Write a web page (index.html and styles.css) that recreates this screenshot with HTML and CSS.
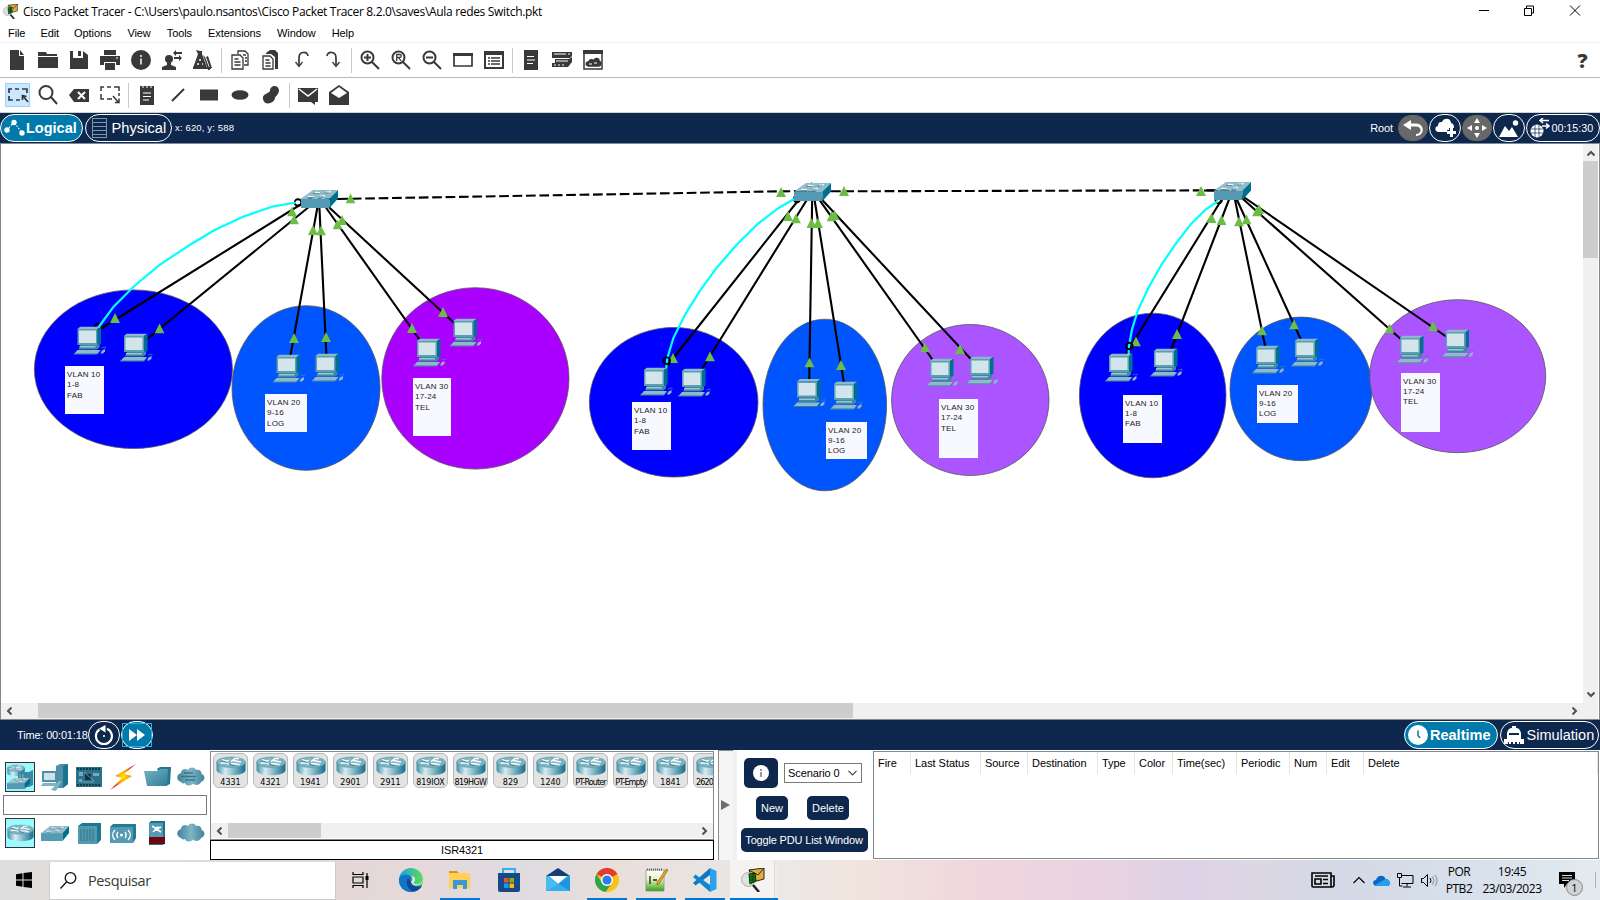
FILE: index.html
```html
<!DOCTYPE html>
<html lang="pt">
<head>
<meta charset="utf-8">
<title>Cisco Packet Tracer</title>
<link rel="stylesheet" href="styles.css">
</head>
<body>
<svg class="defs" width="0" height="0">
  <defs>
    <linearGradient id="rg" x1="0" x2="1"><stop offset="0" stop-color="#3c8fa8"/><stop offset=".3" stop-color="#d9edf2"/><stop offset=".55" stop-color="#8fc0ce"/><stop offset="1" stop-color="#156f8b"/></linearGradient>
    <linearGradient id="cg" x1="0" x2="1"><stop offset="0" stop-color="#3f8299"/><stop offset=".5" stop-color="#7fb5c6"/><stop offset="1" stop-color="#3f8299"/></linearGradient>
    <linearGradient id="fg" x1="0" x2="1" y1="0" y2="1"><stop offset="0" stop-color="#79b2c4"/><stop offset="1" stop-color="#2f7d98"/></linearGradient>
    <radialGradient id="bolt"><stop offset="0" stop-color="#ffe600"/><stop offset=".5" stop-color="#ff9a00"/><stop offset="1" stop-color="#f01414"/></radialGradient>
    <linearGradient id="edge" x1="0" x2="1"><stop offset="0" stop-color="#1b9de2"/><stop offset="1" stop-color="#5fdd5a"/></linearGradient>
    <linearGradient id="npp" x1="0" x2="0" y1="0" y2="1"><stop offset="0" stop-color="#fff"/><stop offset=".45" stop-color="#e4f5c0"/><stop offset="1" stop-color="#2fa312"/></linearGradient>
  </defs>
  <symbol id="tri" viewBox="0 0 10 10"><path d="M5 0L10 10H0z" fill="#6bbd45"/></symbol>
  <symbol id="switch" viewBox="0 0 37 18">
    <path d="M0 8.5L12 0H37L28.5 8.5z" fill="#93bccb"/><path d="M0 8.500H28.500V18H0z" fill="#559ab3"/><path d="M28.500 8.500L37 0V8.500L28.500 18z" fill="#00708f"/>
    <path d="M14 2.500h5M25 2h4M8 6.500h5M19 6h5M16 1.500l-2 1.500M28 1l2 1M9 5.500l-2 1.500M22 5l2 1.500" stroke="#fff" stroke-width=".9" fill="none"/><path d="M12 3.500h6M23 3h5M7 7.500h6M18 7h5" stroke="#34738a" stroke-width=".6"/>
  </symbol>
  <symbol id="pc" viewBox="0 0 33 28">
    <path d="M4 2.500L7 0H27.500L24 2.500z" fill="#8fb9c8"/><path d="M24 2.500L27.500 0V17L24 20z" fill="#00708f"/><path d="M4 2.500H24V18.500H4z" fill="#5b9fb5"/>
    <path d="M5.500 4H22.500V16.500H5.500z" fill="#d3e4ea"/><path d="M7 18.500H22L26 18V21L23 23H5z" fill="#3c8aa2"/><path d="M6 19.500H22V21H6z" fill="#9cc4d1"/>
    <path d="M4 23.500H27L23.500 28H0z" fill="#8fb9c8"/><path d="M0 27H24L27 23.500V24.500L24 28H0z" fill="#2f7d98"/><path d="M28.500 24L31.500 22.500V25L29.500 27H27z" fill="#8fb9c8"/><path d="M28 21.500l4-1v1.500" stroke="#3c8aa2" fill="none" stroke-width=".7"/>
  </symbol>
  <symbol id="router" viewBox="0 0 30 19">
    <path d="M.5 5.500V13.500C.5 20.500 29.500 20.500 29.500 13.500V5.500z" fill="url(#rg)"/><ellipse cx="15" cy="5.700" rx="14.500" ry="5.200" fill="#7fb3c3" stroke="#4b8fa5" stroke-width=".5"/>
    <path d="M6 3l5 1.500 2-1M4.500 6.500h6l2 1.500M15 5l4-3h4M17 4l8 1.500M15 7l6 .5 3 1" stroke="#fff" stroke-width="1.300" fill="none"/><path d="M5 4.500l6 1.500M14 8l5 1.500" stroke="#22718a" stroke-width=".7"/>
  </symbol>
  <symbol id="cloud" viewBox="0 0 28 20"><path d="M4 15C-1 14-1 7 4 6C4 2 9 1 11 3C13-.5 18 0 19 3C22 2 25 4 24.500 7C28.500 8 28.500 14 24 15C23 18 18 19 16 16.500C13 20 8 18.500 8 16C6 17 4.500 16 4 15z" fill="url(#cg)"/></symbol>
  <symbol id="left" viewBox="0 0 7 8"><path d="M5.500 .5L2 4L5.500 7.500" fill="none" stroke="#505050" stroke-width="2"/></symbol>
  <symbol id="right" viewBox="0 0 7 8"><path d="M1.500 .5L5 4L1.500 7.500" fill="none" stroke="#505050" stroke-width="2"/></symbol>
  <symbol id="pt" viewBox="0 0 24 24"><path d="M8 2L23 0V11L12 14z" fill="#e0ac48" stroke="#332506"/><path d="M8 2L17 7L23 0" fill="none" stroke="#332506"/><circle cx="7.500" cy="11.500" r="7" fill="#dfe3df" stroke="#aaa"/><path d="M8 6L14 5L15 13L9 16z" fill="#108417" stroke="#032f06"/><path d="M9 9h5M9 12h5M12 6v9" stroke="#032f06" stroke-width=".7"/><path d="M12 17L18 24" stroke="#222" stroke-width="2.500"/></symbol>
</svg>

<header class="titlebar">
  <svg class="appicon" viewBox="0 0 24 24"><use href="#pt"/></svg>
  <span class="title">Cisco Packet Tracer - C:\Users\paulo.nsantos\Cisco Packet Tracer 8.2.0\saves\Aula redes Switch.pkt</span>
  <svg class="winbtns" width="102" height="12" viewBox="0 0 102 12" fill="none" stroke="#000"><path d="M0 5.500h10M45.500 3.500h7v7h-7zM47.500 3v-2h7v7h-2M91 .5l10 10M101 .5l-10 10"/></svg>
</header>
<nav class="menu"><span>File</span><span>Edit</span><span>Options</span><span>View</span><span>Tools</span><span>Extensions</span><span>Window</span><span>Help</span></nav>

<div class="toolbar main">
  <svg viewBox="0 0 20 20"><path d="M3 0h9v6h5v14H3zM13 0l4 5h-4z"/></svg>
  <svg viewBox="0 0 20 20"><path d="M0 2h8l1 2h10v2H0zM0 7h20v11H0z"/></svg>
  <svg viewBox="0 0 20 20"><path d="M1 1h3v7h10V1l5 4v14H1zM9 1h3v5H9z"/></svg>
  <svg viewBox="0 0 20 20"><path d="M4 0h12v5H4zM0 6h20v9h-4v-3H4v3H0zM5 13h10v7H5z"/><path d="M16 8h2" stroke="#fff"/></svg>
  <svg viewBox="0 0 20 20"><circle cx="10" cy="10" r="10"/><path d="M10 5v2M10 8.500v6" stroke="#fff" stroke-width="1.500"/></svg>
  <svg viewBox="0 0 20 20"><circle cx="7" cy="9" r="4"/><path d="M5 11h4v4l5 2v3H0v-3l5-2z"/><path d="M11 3l3-3v2h6v2h-6v2zM20 8l-3-3v2h-5v2h5v2z"/></svg>
  <svg viewBox="0 0 20 20"><path d="M3 0l4 1h2v3l5 14H0L5 4zM10 5l2 2 5 13h-2zM13 7l2-1 4 12h-2zM0 17h18v2H0z"/><path d="M6 10h2M4 14h2M9 14h1" stroke="#fff" stroke-width="1.500"/></svg>
  <i class="sep"></i>
  <svg viewBox="0 0 20 20" class="o"><path d="M8 4V1h7l3 3v11h-4M2 5h8l3 3v11H2zM4.500 9h4M4.500 12h6M4.500 15h6M13 5h3M15 8h2M15 11h2"/></svg>
  <svg viewBox="0 0 20 20"><path d="M5 3l4-3h5l3 3v16h-3V7l-4-3H5z"/><path class="o" d="M2 6h7l3 3v10H2zM4.500 10h4M4.500 13h5M4.500 16h5"/></svg>
  <svg viewBox="0 0 20 20" class="o"><path d="M16 6C15 1 7 1 7 8V15" stroke-width="1.700"/><path d="M3.500 12L7 16.500L10.500 12"/></svg>
  <svg viewBox="0 0 20 20" class="o"><path d="M4 6C5 1 13 1 13 8V15" stroke-width="1.700"/><path d="M9.500 12L13 16.500L16.500 12"/></svg>
  <i class="sep"></i>
  <svg viewBox="0 0 20 20" class="o"><circle cx="7.500" cy="7.500" r="6" stroke-width="2"/><path d="M12 12l7 7M7.500 4v7M4 7.500h7" stroke-width="2"/></svg>
  <svg viewBox="0 0 20 20" class="o"><circle cx="7.500" cy="7.500" r="6" stroke-width="2"/><path d="M12 12l7 7" stroke-width="2"/><path d="M5.700 11V4.500h3c2 0 2 3 0 3H6M8 8l2 3"/></svg>
  <svg viewBox="0 0 20 20" class="o"><circle cx="7.500" cy="7.500" r="6" stroke-width="2"/><path d="M12 12l7 7M4 7.500h7" stroke-width="2"/></svg>
  <svg viewBox="0 0 20 20" class="o"><path d="M1 4h18v12H1z" stroke-width="1.700"/><path d="M0 4.500h20" stroke-width="3"/></svg>
  <svg viewBox="0 0 20 20" class="o"><path d="M1 2h18v16H1z" stroke-width="2"/><path d="M0 3h20" stroke-width="4"/><path d="M4 8h2M7 8h9M4 11h2M7 11h9M4 14h2M7 14h9"/></svg>
  <i class="sep"></i>
  <svg viewBox="0 0 20 20"><path d="M3 0h14v20H3z"/><path d="M6 6.500h7M6 10h8M6 13.500h6" stroke="#fff" stroke-width="1.200"/></svg>
  <svg viewBox="0 0 20 20"><path d="M0 2h20v4l-2 2H0zM3 9h14l3-2v5l-4 5H0v-4h3z"/><path d="M2 4h12M16 4h2M4 11h12M2 15h2M6 15h2M10 15h2" stroke="#fff"/></svg>
  <svg viewBox="0 0 20 20" class="o"><path d="M1 1h18v18H1z" stroke-width="1.500"/><path d="M0 2h20" stroke-width="4"/><path d="M5 16c-3-1-2-5 1-4 0-3 4-3 5-1 0-4 6-3 5 0 3 1 2 5 0 5z" fill="#39393b"/><path d="M6 14h3M11 13h3" stroke="#fff" stroke-width="1"/></svg>
  <span class="help">?</span>
</div>

<div class="toolbar edit">
  <span class="active"><svg viewBox="0 0 20 20" class="o"><path d="M1 8V4h3M7 4h4M14 4h5v4M1 11v4h4M8 15h4" stroke-width="1.700"/><path d="M20 17l-5-6M14.500 15v-4.500l4 1" stroke-width="1.700"/></svg></span>
  <svg viewBox="0 0 20 20" class="o"><circle cx="8" cy="7.500" r="6.500" stroke-width="2"/><path d="M13 12l6 7" stroke-width="2"/></svg>
  <svg viewBox="0 0 20 20"><path d="M0 10l5-6h15v13H5z"/><path d="M9 7l7 7M16 7l-7 7" stroke="#fff" stroke-width="2"/></svg>
  <svg viewBox="0 0 20 20" class="o"><path d="M1 6V2h3M7 2h4M14 2h5v4M1 9v5h3M7 14h5M19 8v3" stroke-width="1.500"/><path d="M13 11l6 7M15 17.500h4v-4" stroke-width="1.500"/></svg>
  <i class="sep"></i>
  <svg viewBox="0 0 20 20"><path d="M3 1h14v19H3z"/><path d="M6 0v3M10 0v3M14 0v3" stroke="#fff"/><path d="M6 8h8M6 11.500h8M6 15h6" stroke="#fff" stroke-width="1.200"/></svg>
  <svg viewBox="0 0 20 20" class="o"><path d="M4 16L16 4" stroke-width="2"/></svg>
  <svg viewBox="0 0 20 20"><path d="M1 4.500h18v11H1z"/></svg>
  <svg viewBox="0 0 20 20"><ellipse cx="10" cy="10" rx="8.500" ry="4.800"/></svg>
  <svg viewBox="0 0 20 20"><path d="M9 6C9 0 17-1 18 5C18 10 14 11 14 13C13 19 3 21 2 14C1 9 7 9 9 6z"/></svg>
  <i class="sep"></i>
  <svg viewBox="0 0 20 20"><path d="M0 3h20v14h-3v3l-4-3H0z"/><path d="M1 4l9 7 9-7" stroke="#fff" fill="none" stroke-width="1.500"/></svg>
  <svg viewBox="0 0 20 20"><path d="M0 7l10-7 10 7v13H0z"/><path d="M2 8l8-6 8 6-8 5z" fill="#fff"/></svg>
</div>

<div class="bar nav">
  <div class="pill on logical"><svg width="21" height="18" viewBox="0 0 21 18"><path d="M3 11L10 3L18 14" stroke="#fff" stroke-width="1.200" stroke-dasharray="1.500 1.500" fill="none"/><g fill="#fff"><circle cx="3" cy="11" r="2.700"/><circle cx="10" cy="3.500" r="2.700"/><circle cx="18" cy="14" r="2.700"/></g></svg><b>Logical</b></div>
  <div class="pill physical"><svg width="15" height="20" viewBox="0 0 15 20"><path d="M.5.500h14v19H.5zM.5 4.500h14M.5 8.500h14M.5 12.500h14M.5 16.500h14" fill="none" stroke="#8493ae"/></svg><span>Physical</span></div>
  <span class="coords">x: 620, y: 588</span>
  <span class="root">Root</span>
  <div class="round gray"><svg width="20" height="18" viewBox="0 0 20 18"><path d="M0 6L8 1V4.500H13C22 4.500 22 17 13 17V15C19 15 19 7.500 13 7.500H8V11z" fill="#fff"/></svg></div>
  <div class="round"><svg width="21" height="20" viewBox="0 0 21 20" fill="#fff"><path d="M3 14C-1 13 0 8 3 8C3 3 7 4 7 4C9-1 16 0 16 5C20 6 20 12 16 12V14z"/><path d="M12 14.500h9M16.500 10v9" stroke="#0e274c" stroke-width="5"/><path d="M12 14.500h9M16.500 10v9" stroke="#fff" stroke-width="3"/></svg></div>
  <div class="round gray"><svg width="20" height="20" viewBox="0 0 20 20" fill="#fff"><path d="M10 0l3 5H7zM10 20l3-5H7zM0 10l5-3v6zM20 10l-5-3v6z"/><circle cx="10" cy="10" r="2"/></svg></div>
  <div class="round"><svg width="20" height="18" viewBox="0 0 20 18" fill="#fff"><path d="M0 18L6 7l4 5 3-4 6 10z"/><circle cx="16.500" cy="4" r="2.700"/></svg></div>
  <div class="pill env"><svg width="20" height="20" viewBox="0 0 20 20"><circle cx="7" cy="13" r="6.500" fill="#fff"/><path d="M1 11h12M1 15h12M5 7v12M9 7v12" stroke="#0e274c" stroke-width=".7"/><path d="M10 2.500h9M13 0l-3 2.500 3 2.500M12 8h7M16 5.500L19 8l-3 2.500" stroke="#fff" stroke-width="1.600" fill="none"/></svg><span>00:15:30</span></div>
</div>

<main class="workspace">
  <div class="canvas">
    <svg class="net" width="1582" height="559" viewBox="1 144 1582 559">
      <g stroke="#555" stroke-width=".8">
        <ellipse cx="133.400" cy="369.200" rx="99" ry="79.300" fill="#00f"/>
        <ellipse cx="306" cy="388" rx="74" ry="82.300" fill="#0055ff"/>
        <ellipse cx="475.400" cy="378.400" rx="93.600" ry="90.700" fill="#a0f"/>
        <ellipse cx="673.700" cy="402.300" rx="84.300" ry="74.800" fill="#00f"/>
        <ellipse cx="824.800" cy="405" rx="61.800" ry="85.800" fill="#0055ff"/>
        <ellipse cx="970.300" cy="400" rx="78.700" ry="75.500" fill="#aa55ff"/>
        <ellipse cx="1152.700" cy="395.500" rx="73.300" ry="82.300" fill="#00f"/>
        <ellipse cx="1301" cy="388.900" rx="71" ry="71.800" fill="#0055ff"/>
        <ellipse cx="1457.700" cy="376.200" rx="88" ry="76.500" fill="#aa55ff"/>
      </g>
      <g stroke="#000" stroke-width="2.100" fill="none">
        <path d="M319 193L89 336M319.500 198.300L136 348M319 198.500L288 369M319 198.500L327 368M319.500 198.500L429 353M319.500 198.500L465 333"/>
        <path d="M812 183L656 380M812 191.500L694 382M812.300 191L809 393M813 190L846 396M812 189.400L942 373M812 189L982 371"/>
        <path d="M1232 183L1121 362M1232.700 190L1166 363M1233 190L1268 360M1232.500 190L1307 353M1232 189.300L1412 349M1232 189L1457 344"/>
        <path d="M325 199.200L812 190.800" stroke-dasharray="9.700 3.700"/><path d="M831 191.300L1232 190.300" stroke-dasharray="9.700 3.700"/>
        <path d="M331 199h10M1204 190.500h14"/>
      </g>
      <g fill="none" stroke="#000" stroke-width="1.900"><circle cx="298" cy="202.500" r="3.300"/><circle cx="98" cy="327" r="3.200"/><circle cx="797" cy="199" r="3.200"/><circle cx="1218.700" cy="200" r="3.200"/></g>
      <g stroke="#0ff" stroke-width="2.200" fill="none" stroke-linejoin="round">
        <path d="M296 202.500L272 206.700L243 216.700L214.600 230L186 247.300L159 265.300L134.300 286L113.600 306.700L98 328"/>
        <path d="M795 198.500L779 207.700L758.300 223.300L736.700 244.700L716.700 267.700L699.300 291.700L684.700 315.300L673.300 338.300L667.300 358.300L666 371"/>
        <path d="M1218 201L1206 209.300L1190.700 224.300L1176 243.300L1161.700 264.300L1149 286.700L1138 310L1132 329.300L1129 346L1128.500 356"/>
      </g>
      <g><use href="#tri" x="345.500" y="193.500" width="10" height="10"/><use href="#tri" x="287" y="206.500" width="10" height="10"/><use href="#tri" x="289" y="214.500" width="10" height="10"/><use href="#tri" x="308" y="225" width="10" height="10"/><use href="#tri" x="316" y="225.500" width="10" height="10"/><use href="#tri" x="332.500" y="219.500" width="10" height="10"/><use href="#tri" x="337" y="215" width="10" height="10"/><use href="#tri" x="110" y="313" width="10" height="10"/><use href="#tri" x="154.500" y="323.500" width="10" height="10"/><use href="#tri" x="289" y="333" width="10" height="10"/><use href="#tri" x="321" y="332" width="10" height="10"/><use href="#tri" x="407" y="323" width="10" height="10"/><use href="#tri" x="438" y="307" width="10" height="10"/>
      <use href="#tri" x="776" y="187" width="10" height="10"/><use href="#tri" x="839" y="186" width="10" height="10"/><use href="#tri" x="783" y="211" width="10" height="10"/><use href="#tri" x="791" y="213.500" width="10" height="10"/><use href="#tri" x="806.500" y="218" width="10" height="10"/><use href="#tri" x="813" y="218" width="10" height="10"/><use href="#tri" x="826.500" y="211.500" width="10" height="10"/><use href="#tri" x="829.500" y="210" width="10" height="10"/><use href="#tri" x="668" y="353" width="10" height="10"/><use href="#tri" x="705" y="351.500" width="10" height="10"/><use href="#tri" x="804.500" y="357.500" width="10" height="10"/><use href="#tri" x="836" y="360" width="10" height="10"/><use href="#tri" x="920" y="342.500" width="10" height="10"/><use href="#tri" x="955" y="344" width="10" height="10"/>
      <use href="#tri" x="1196" y="186" width="10" height="10"/><use href="#tri" x="1206.500" y="213" width="10" height="10"/><use href="#tri" x="1216.500" y="215" width="10" height="10"/><use href="#tri" x="1234" y="216.500" width="10" height="10"/><use href="#tri" x="1241.500" y="214.500" width="10" height="10"/><use href="#tri" x="1252" y="206.500" width="10" height="10"/><use href="#tri" x="1254" y="204" width="10" height="10"/><use href="#tri" x="1131" y="336.500" width="10" height="10"/><use href="#tri" x="1172" y="329" width="10" height="10"/><use href="#tri" x="1257" y="325.500" width="10" height="10"/><use href="#tri" x="1289" y="319.500" width="10" height="10"/><use href="#tri" x="1384.500" y="323.500" width="10" height="10"/><use href="#tri" x="1428" y="321" width="10" height="10"/></g>
      <g fill="none" stroke="#000" stroke-width="1.900"><circle cx="666.700" cy="360.700" r="3.300"/><circle cx="1129.300" cy="346" r="3.300"/></g>
      <use href="#switch" x="301" y="190" width="37" height="18"/><use href="#switch" x="794" y="183" width="37" height="18"/><use href="#switch" x="1214" y="182" width="37" height="18"/>
      <use href="#pc" x="73.500" y="326.500" width="33" height="28"/><use href="#pc" x="120" y="333.500" width="33" height="28"/><use href="#pc" x="272.500" y="354.500" width="33" height="28"/><use href="#pc" x="311.500" y="353.500" width="33" height="28"/><use href="#pc" x="413" y="338.500" width="33" height="28"/><use href="#pc" x="449.500" y="318.500" width="33" height="28"/>
      <use href="#pc" x="640" y="367.500" width="33" height="28"/><use href="#pc" x="678" y="368.500" width="33" height="28"/><use href="#pc" x="793" y="379" width="33" height="28"/><use href="#pc" x="830" y="381.500" width="33" height="28"/><use href="#pc" x="926" y="358.500" width="33" height="28"/><use href="#pc" x="966" y="356.500" width="33" height="28"/>
      <use href="#pc" x="1105" y="353.500" width="33" height="28"/><use href="#pc" x="1150" y="348.500" width="33" height="28"/><use href="#pc" x="1252" y="345.500" width="33" height="28"/><use href="#pc" x="1291" y="338.500" width="33" height="28"/><use href="#pc" x="1396" y="335.500" width="33" height="28"/><use href="#pc" x="1441.500" y="329.500" width="33" height="28"/>
    </svg>
    <div class="note n1">VLAN 10<br>1-8<br>FAB</div>
    <div class="note n2">VLAN 20<br>9-16<br>LOG</div>
    <div class="note n3">VLAN 30<br>17-24<br>TEL</div>
    <div class="note n4">VLAN 10<br>1-8<br>FAB</div>
    <div class="note n5">VLAN 20<br>9-16<br>LOG</div>
    <div class="note n6">VLAN 30<br>17-24<br>TEL</div>
    <div class="note n7">VLAN 10<br>1-8<br>FAB</div>
    <div class="note n8">VLAN 20<br>9-16<br>LOG</div>
    <div class="note n9">VLAN 30<br>17-24<br>TEL</div>
  </div>
  <div class="vscroll"><svg width="8" height="7" viewBox="0 0 8 7"><path d="M.5 5.500L4 2L7.500 5.500" fill="none" stroke="#505050" stroke-width="2"/></svg><i></i><svg width="8" height="7" viewBox="0 0 8 7"><path d="M.5 1.500L4 5L7.500 1.500" fill="none" stroke="#505050" stroke-width="2"/></svg></div>
  <div class="hscroll"><svg width="7" height="8"><use href="#left"/></svg><i></i><svg width="7" height="8"><use href="#right"/></svg></div>
</main>

<div class="bar sim">
  <span class="time">Time: 00:01:18</span>
  <div class="round"><svg width="20" height="20" viewBox="0 0 20 20"><path d="M13 3.800A8 8 0 1 1 5.500 4.500" fill="none" stroke="#fff" stroke-width="2.200"/><path d="M5 3.500L11.500 0V7.500z" fill="#fff"/><circle cx="10" cy="11" r="1.100" fill="#fff"/></svg></div>
  <div class="round ff"><svg width="18" height="14" viewBox="0 0 18 14"><path d="M1 1l8 6-8 6zM9 1l8 6-8 6z" fill="#fff"/></svg></div>
  <div class="pill on realtime"><svg width="20" height="20" viewBox="0 0 20 20"><circle cx="10" cy="10" r="10" fill="#fff"/><path d="M10 5.500v5l2 2.500" stroke="#0079ab" stroke-width="1.500" fill="none"/></svg><b>Realtime</b></div>
  <div class="pill simulation"><svg width="20" height="18" viewBox="0 0 20 18" fill="#fff"><path d="M3 16V7C4 3 6 2 8 2V0h4v2c2 0 4 1 5 5v9zM0 13h4v5H0zM16 13h4v5h-4zM5 16h2v2H5zM9 16h2v2H9zM13 16h2v2h-2z"/><path d="M5 8h10" stroke="#0e274c" stroke-width="2"/></svg><span>Simulation</span></div>
</div>

<section class="bottom">
  <div class="devices">
    <div class="drow">
      <span class="sel"><svg width="28" height="27" viewBox="0 0 28 27"><use href="#router" x="1" y="0" width="18" height="13"/><path d="M12 8h11l4-2v15l-4 2H12z" fill="#3c88a0"/><path d="M14 10v11M17 10v11" stroke="#77aec0"/><use href="#switch" x="1" y="13" width="23" height="13"/></svg></span>
      <svg width="27" height="27" viewBox="0 0 27 27"><path d="M15 2l4-2h8v20l-5 4h-7z" fill="#4b91a8"/><path d="M22 2l5-2v20l-5 4z" fill="#1b7390"/><path d="M1 7h15v11H1z" fill="#4b91a8"/><path d="M3 9h11v7H3z" fill="#cfe2e8"/><path d="M2 19h14v3H0zM10 26l8-9h3l-6 10z" fill="#7fb2c3"/></svg>
      <svg width="26" height="20" viewBox="0 0 26 20"><path d="M0 0h26v20H0z" fill="#2a7189"/><path d="M1 2h24M1 18h24" stroke="#113e4c" stroke-width="2" stroke-dasharray="2 1"/><path d="M9 7h6v6H9z" fill="#143440"/><path d="M3 5h4v4H3zM17 6h6v3h-6zM3 12h3v3H3z" fill="#6eabc0"/><path d="M8 5l10 9M6 15h12" stroke="#a7cad6" stroke-width=".6"/></svg>
      <svg width="28" height="28" viewBox="0 0 28 28"><path d="M27 1L6 13l7 2L1 27l22-14-8-2z" fill="url(#bolt)"/></svg>
      <svg width="27" height="21" viewBox="0 0 27 21"><path d="M13 2l3-2h11l-1 17-4 2z" fill="#24778f"/><path d="M0 4h14l2-2h8l-1 17H3z" fill="url(#fg)"/></svg>
      <svg width="28" height="20" viewBox="0 0 28 20"><use href="#cloud"/><path d="M7 6h9M4 9.500h15M8 13h10" stroke="#35788f" stroke-width="1.500"/></svg>
    </div>
    <div class="field"></div>
    <div class="drow">
      <span class="sel"><svg width="27" height="20" viewBox="0 0 30 19"><use href="#router"/></svg></span>
      <svg width="28" height="15" viewBox="0 0 37 18" preserveAspectRatio="none"><use href="#switch"/></svg>
      <svg width="23" height="21" viewBox="0 0 23 21"><path d="M0 3l4-3h19v17l-4 4H0z" fill="#1f7893"/><path d="M0 3h19v18H0z" fill="#539ab0"/><path d="M3 6v12M6 6v12M9 6v12M12 6v12M15 6v12" stroke="#2b748b"/></svg>
      <svg width="26" height="19" viewBox="0 0 26 19"><path d="M0 3l3-3h23v14l-3 5H0z" fill="#237b96"/><path d="M0 3h23v16H0z" fill="#559ab3"/><path d="M5 6c-3 3-3 7 0 10M8 8c-1.500 2-1.500 4 0 6M18 6c3 3 3 7 0 10M15 8c1.500 2 1.500 4 0 6" stroke="#fff" fill="none" stroke-width="1.400"/><circle cx="11.500" cy="11" r="1.500" fill="#fff"/></svg>
      <svg width="16" height="24" viewBox="0 0 16 24"><path d="M0 2l2-2h14v22l-2 2H0z" fill="#1d718a"/><path d="M0 2h14v14H0z" fill="#559ab3"/><path d="M0 16h16v7H0z" fill="#6d0710"/><path d="M3 5l3 2 4-1M4 11l3-3 5 3M8 8l4-2" stroke="#fff" stroke-width="1.600" fill="none"/></svg>
      <svg width="28" height="20" viewBox="0 0 28 20"><use href="#cloud"/></svg>
    </div>
  </div>
  <div class="models">
    <div class="list">
      <div class="items">
        <div class="item"><svg><use href="#router"/></svg><span>4331</span></div>
        <div class="item"><svg><use href="#router"/></svg><span>4321</span></div>
        <div class="item"><svg><use href="#router"/></svg><span>1941</span></div>
        <div class="item"><svg><use href="#router"/></svg><span>2901</span></div>
        <div class="item"><svg><use href="#router"/></svg><span>2911</span></div>
        <div class="item"><svg><use href="#router"/></svg><span class="t1">819IOX</span></div>
        <div class="item"><svg><use href="#router"/></svg><span class="t2">819HGW</span></div>
        <div class="item"><svg><use href="#router"/></svg><span>829</span></div>
        <div class="item"><svg><use href="#router"/></svg><span>1240</span></div>
        <div class="item"><svg><use href="#router"/></svg><span class="t3">PT-Router</span></div>
        <div class="item"><svg><use href="#router"/></svg><span class="t3">PT-Empty</span></div>
        <div class="item"><svg><use href="#router"/></svg><span>1841</span></div>
        <div class="item"><svg><use href="#router"/></svg><span class="t4">2620</span></div>
      </div>
      <div class="lscroll"><svg width="7" height="8"><use href="#left"/></svg><i></i><svg width="7" height="8"><use href="#right"/></svg></div>
    </div>
    <div class="model-name">ISR4321</div>
  </div>
  <div class="splitter"><svg width="9" height="12" viewBox="0 0 9 12"><path d="M0 1L9 6L0 11z" fill="#6d6d6d"/></svg></div>
  <div class="scenario">
    <div class="srow top"><span class="info"><svg width="16" height="16" viewBox="0 0 16 16"><circle cx="8" cy="8" r="8" fill="#fff"/><path d="M8 4v2M8 7v5" stroke="#8590a5" stroke-width="1.800"/></svg></span><span class="combo">Scenario 0<svg width="9" height="6" viewBox="0 0 9 6"><path d="M.5.800L4.500 4.800L8.500.800" fill="none" stroke="#444" stroke-width="1.200"/></svg></span></div>
    <div class="srow mid"><span class="btn">New</span><span class="btn">Delete</span></div>
    <div class="srow"><span class="btn wide">Toggle PDU List Window</span></div>
  </div>
  <div class="pdu"><span>Fire</span><span>Last Status</span><span>Source</span><span>Destination</span><span>Type</span><span>Color</span><span>Time(sec)</span><span>Periodic</span><span>Num</span><span>Edit</span><span>Delete</span></div>
</section>

<footer class="taskbar">
  <div class="start"><svg width="16" height="16" viewBox="0 0 16 16"><path d="M0 2.200L6.500 1.300V7.500H0zM7.500 1.100L16 0V7.500H7.500zM0 8.500H6.500V14.700L0 13.800zM7.500 8.500H16V16L7.500 14.900z"/></svg></div>
  <div class="search"><svg width="17" height="17" viewBox="0 0 17 17" fill="none" stroke="#111" stroke-width="1.300"><circle cx="10.500" cy="6" r="5.300"/><path d="M6.500 10L.5 16.500"/></svg><span>Pesquisar</span></div>
  <div class="view"><svg width="17" height="16" viewBox="0 0 17 16" fill="none" stroke="#000" stroke-width="1.200"><path d="M1 0v2.500h10V0M1 16v-2.500h10V16M1 5h10v6H1z"/><path d="M15 1v15"/><path d="M13.500 4h3v4h-3z" fill="#000" stroke="none"/></svg></div>
  <div class="app"><svg viewBox="0 0 24 24"><circle cx="12" cy="12" r="12" fill="url(#edge)"/><path d="M0 12C0 7 5 6 9 7C14 8 13 12 12 14C13 19 19 20 23 17C20 23 15 24 12 24C5 24 0 19 0 12z" fill="#1473c8"/><path d="M9 10C6 14 8 22 15 23.500C19 23 22 20 23 17.500C18 20 12 18 12 14z" fill="#0c4a98"/><path d="M12 14C14 12 14 10 12 8C17 8 17 13 14.500 14.500C15 17 23 17 24 11C24 18 13 19 12 14z" fill="#e6e2dd"/></svg></div>
  <div class="app run"><svg viewBox="0 0 24 24"><path d="M1 3h8l2 2h-10z" fill="#d9960b"/><path d="M1 5h20l1 3v12H1z" fill="#ffcf56"/><path d="M5 12h14v9h-4v-4H9v4H5z" fill="#3c97d9"/></svg></div>
  <div class="app"><svg viewBox="0 0 24 24"><path d="M6 5V1h12v4" fill="none" stroke="#2ab4f0" stroke-width="2"/><path d="M1 5h22v17q0 2-2 2H3q-2 0-2-2z" fill="#17488a"/><path d="M7 10h4.500v4.500H7z" fill="#f25022"/><path d="M12.500 10H17v4.500h-4.500z" fill="#7fba00"/><path d="M7 15.500h4.500V20H7z" fill="#00a4ef"/><path d="M12.500 15.500H17V20h-4.500z" fill="#ffb900"/></svg></div>
  <div class="app"><svg viewBox="0 0 24 24"><path d="M0 8L12 0l12 8z" fill="#123f78"/><path d="M0 8h24v15H0z" fill="#38aee8"/><path d="M3 8h18l-9 8z" fill="#fff"/><path d="M0 8l12 8 12-8v15z" fill="#1d96de"/><path d="M0 8l12 8L0 23z" fill="#45bdf0"/></svg></div>
  <div class="app run"><svg viewBox="0 0 24 24"><circle cx="12" cy="12" r="12" fill="#fbc116"/><path d="M12 12L1.600 6A12 12 0 0 1 22.400 6z" fill="#e33b2e"/><path d="M1.600 6A12 12 0 0 0 10.500 23.900L17 15H7z" fill="#2da44e"/><circle cx="12" cy="12" r="6" fill="#fff"/><circle cx="12" cy="12" r="4.600" fill="#2f7de9"/></svg></div>
  <div class="app run"><svg viewBox="0 0 24 24"><path d="M2 2h18v21H2z" fill="url(#npp)" stroke="#888" stroke-width=".7"/><path d="M3 1.500h16" stroke="#666" stroke-dasharray="1 1" stroke-width="2"/><path d="M6 8v8M9 12h4" stroke="#222" stroke-width="1.300"/><path d="M22 1l2 1-9 14-2 1 0-2.500z" fill="#e9a52f" stroke="#8a4b12" stroke-width=".6"/></svg></div>
  <div class="app run"><svg viewBox="0 0 24 24"><path d="M17 0l6.500 3v18L17 24z" fill="#2ba2ec"/><path d="M17 0L0 15l2.500 2.500L17 7z" fill="#0f77c4"/><path d="M17 24L0 9l2.500-2.500L17 17z" fill="#0f86d4"/></svg></div>
  <div class="app run current"><svg viewBox="0 0 24 24"><use href="#pt"/></svg></div>
  <div class="tray">
    <svg class="news" width="24" height="16" viewBox="0 0 24 16" fill="none" stroke="#000" stroke-width="1.600"><path d="M1 1h19v14H2q-1 0-1-1zM20 4h3v9q0 2-2 2h-3M4 7h6v5H4zM4 4h13M12 7.500h5M12 11.500h5"/></svg>
    <svg width="12" height="8" viewBox="0 0 12 8"><path d="M.5 7L6 1.500L11.500 7" fill="none" stroke="#000" stroke-width="1.200"/></svg>
    <svg width="17" height="11" viewBox="0 0 17 11"><path d="M4 11C-1 11-1 5 3 5C4 0 11-1 12.500 4C18 4 18 11 14 11z" fill="#0a66c8"/><path d="M2 10L12.500 4C18 4 18 11 14 11H4z" fill="#2b9cf0"/></svg>
    <svg width="17" height="15" viewBox="0 0 17 15" fill="none" stroke="#000"><path d="M5 2.500h11v8H4.500M10 10.500v3M6 14h8M.5.500h4v4h-4zM2.500 5v8h3"/></svg>
    <svg width="17" height="13" viewBox="0 0 17 13" fill="none" stroke="#000"><path d="M.5 4.500h2l4-4v12l-4-4h-2zM9 4q2 2.500 0 5"/><path d="M11.500 2.500q3 4 0 8M14 1q4 5.500 0 11" stroke="#888"/></svg>
    <div class="two lang"><span>POR</span><span>PTB2</span></div>
    <div class="two clock"><span>19:45</span><span>23/03/2023</span></div>
    <div class="notif"><svg width="16" height="16" viewBox="0 0 16 16"><path d="M0 0h16v12H8l-3 4v-4H0z"/><path d="M3 3.500h10M3 6h10M3 8.500h7" stroke="#ddd"/></svg><span class="badge">1</span></div>
  </div>
</footer>
</body>
</html>
```
FILE: styles.css
```css
* { box-sizing: border-box; }
body { margin: 0; width: 1600px; height: 900px; overflow: hidden; display: flex; flex-direction: column; background: #fff; color: #000; font: 11px "Liberation Sans", Arial, sans-serif; }
svg { display: block; flex: none; }
.defs { position: absolute; }

.titlebar { height: 23px; flex: none; display: flex; align-items: center; padding-left: 3px; }
.appicon { width: 15px; height: 15px; }
.title { font: 12px "Open Sans", sans-serif; margin-left: 5px; letter-spacing: -0.32px; white-space: pre; line-height: 22px; }
.winbtns { margin: -2px 19px 0 auto; }

.menu { height: 20px; flex: none; display: flex; border-bottom: 1px solid #f0f0f0; padding-left: 8px; gap: 16px; line-height: 20px; letter-spacing: -0.08px; }
.menu span:first-child, .menu span:nth-child(2) { margin-right: -1px; }

.toolbar { display: flex; align-items: center; flex: none; height: 35px; padding-left: 1.5px; border-bottom: 1px solid #b9b9b9; }
.toolbar svg { width: 20px; height: 20px; margin: 0 5.5px; fill: #39393b; overflow: visible; }
.toolbar svg.o, .toolbar .o { fill: none; stroke: #39393b; stroke-width: 1.3; }
.sep { width: 1px; height: 25px; background: #c8c8c8; margin: 0 2.5px; }
.help { margin: 0 12.5px 0 auto; font: 800 20px "Open Sans", sans-serif; color: #39393b; }
.edit { border-bottom-color: #ccd3d0; }
.active { width: 25px; height: 24px; background: #cce8ff; border: 1px solid #99d1ff; margin: 0 2.5px 0 3.5px; display: flex; align-items: center; justify-content: center; }

.bar { background: #0e274c; color: #fff; display: flex; align-items: center; flex: none; height: 31px; padding-bottom: 1px; }
.nav { border-bottom: 1px solid #7d8a99; }
.pill { height: 28px; border: 1px solid #fff; border-radius: 14px; display: flex; align-items: center; font-size: 14.7px; flex: none; }
.pill.on { background: #0079ab; }
.pill b { font-size: 14.5px; }
.logical { width: 83px; padding-left: 3px; gap: 1px; }
.physical { width: 87px; margin-left: 2px; padding-left: 6px; gap: 4.5px; }
.coords { font-size: 9.5px; letter-spacing: .15px; margin-left: 3px; }
.root { margin: 0 4px 0 auto; letter-spacing: -0.1px; }
.round { width: 32px; height: 28px; border: 1px solid #fff; border-radius: 14px; display: flex; align-items: center; justify-content: center; flex: none; }
.gray { background: #686868; border-color: #686868; width: 30px; height: 26px; margin: 0 1px; }
.env { width: 74px; margin: 0 0 0 1px; padding-left: 3px; gap: 1.5px; font-size: 10.8px; letter-spacing: -0.05px; }

.workspace { height: 576px; flex: none; display: grid; grid-template-columns: 1582px 15px; grid-template-rows: 559px 16px; border: solid #828790; border-width: 0 1px 1px; padding-right: 1px; }
.canvas { position: relative; overflow: hidden; background: #fff; }
.note { position: absolute; background: #f8f8ff; color: #222; font-size: 8px; line-height: 10.3px; padding: 4px 0 0 2.5px; letter-spacing: .2px; white-space: nowrap; width: 39px; }
.n1 { left: 63.500px; top: 222px; height: 48px; }
.n2 { left: 263.500px; top: 250px; width: 42px; height: 38px; }
.n3 { left: 411.500px; top: 234px; width: 38.500px; height: 58px; }
.n4 { left: 630.500px; top: 258px; height: 48px; }
.n5 { left: 824.500px; top: 277.500px; width: 41px; height: 37.500px; }
.n6 { left: 937.500px; top: 255px; height: 58.500px; }
.n7 { left: 1121.500px; top: 250.500px; height: 48px; }
.n8 { left: 1255.500px; top: 240.500px; width: 41.500px; height: 38px; }
.n9 { left: 1399.500px; top: 228.500px; height: 59px; }
.vscroll { background: #f0f0f0; display: flex; flex-direction: column; align-items: center; padding: 6px 0 5px; }
.vscroll i { width: 15px; height: 97px; background: #cdcdcd; margin: 4px 0 auto; }
.hscroll { grid-column: 1 / 3; background: #f0f0f0; display: flex; align-items: center; padding: 0 20px 1px 5px; }
.hscroll i { width: 815px; height: 15px; background: #cdcdcd; margin: 0 auto 0 25px; }

.sim { height: 30px; padding-bottom: 0; }
.time { width: 71px; margin-left: 17px; white-space: nowrap; letter-spacing: -0.17px; }
.ff { background: #0079ab; margin-left: 1px; position: relative; }
.ff::after { content: ""; position: absolute; inset: 1px 0; border: 1px solid #1fb3e8; }
.realtime { width: 94px; margin-left: auto; padding-left: 3px; gap: 2px; }
.simulation { width: 99px; margin: 0 1px 0 2px; padding-left: 3px; gap: 2.5px; font-size: 14.5px; }

.bottom { height: 110px; flex: none; display: flex; }
.devices { width: 210px; padding: 12px 0 0 3px; }
.drow { height: 30px; display: grid; grid-template-columns: 34px 35px repeat(4, 34px); place-items: center; width: 205px; }
.sel { width: 30px; height: 30px; background: #99faff; border: 1px solid #333; display: flex; align-items: center; justify-content: center; }
.field { width: 204px; height: 20px; border: 1px solid #7a7a7a; margin: 3px 0; }
.models { width: 504px; display: flex; flex-direction: column; padding-top: 1px; }
.list { height: 89px; border: 1px solid #828790; display: flex; flex-direction: column; justify-content: space-between; padding-bottom: 1px; }
.items { display: flex; gap: 5px; padding: 1px 0 0 2px; overflow: hidden; }
.item { width: 35px; height: 35px; flex: none; background: #e3e3e3; border: 1px solid #b9b9b9; border-radius: 6px; display: flex; flex-direction: column; align-items: center; padding-top: 2px; font: 8px "DejaVu Sans", sans-serif; line-height: 10px; white-space: nowrap; }
.item svg { width: 30px; height: 20px; }
.item span { margin-top: 2px; }
.item .t1 { letter-spacing: -0.1px; }
.item .t2 { letter-spacing: -0.6px; }
.item .t3 { letter-spacing: -0.9px; }
.item .t4 { letter-spacing: -0.8px; align-self: flex-start; padding-left: 2px; }
.lscroll { height: 15px; background: #f0f0f0; display: flex; align-items: center; padding: 0 5px; }
.lscroll i { width: 93px; height: 15px; background: #cdcdcd; margin: 0 auto 0 5px; }
.model-name { height: 20px; border: 1px solid #000; text-align: center; line-height: 19px; letter-spacing: -0.1px; }
.splitter { width: 23px; border-right: 4px solid #f0f0f0; background: #f5f5f5; margin-left: 0; border-left: 4px solid #fff; display: flex; align-items: center; padding-left: 2.5px; box-shadow: inset 1px 1px #8a8a8a; }
.scenario { width: 136px; padding: 8px 0 0 2px; }
.srow { display: flex; align-items: center; justify-content: center; }
.top { justify-content: flex-start; padding-left: 5px; gap: 6px; height: 30px; }
.info { width: 34px; height: 30px; background: #0e274c; border-radius: 5px; display: flex; align-items: center; justify-content: center; }
.combo { width: 78px; height: 20px; border: 1px solid #7a7a7a; display: flex; align-items: center; justify-content: space-between; padding: 0 4px 0 3px; white-space: nowrap; letter-spacing: -0.1px; }
.mid { justify-content: flex-start; gap: 19px; padding-left: 17px; margin: 8px 0; }
.btn { height: 24px; background: #0e274c; color: #fff; border-radius: 5px; line-height: 24px; padding: 0 5px; white-space: nowrap; }
.wide { width: 127px; padding: 0; text-align: center; letter-spacing: -0.17px; margin-right: 4px; }
.pdu { width: 726px; height: 108px; margin-top: 1px; border: 1px solid #828790; display: grid; grid-template-columns: 37px 70px 47px 70px 37px 38px 64px 53px 37px 37px 1fr; align-items: start; letter-spacing: -0.05px; }
.pdu span { height: 22px; line-height: 22px; padding-left: 4px; border-right: 1px solid #e5e5e5; white-space: nowrap; }

.taskbar { height: 40px; flex: none; display: flex; align-items: center; font-family: "Open Sans", sans-serif; background: linear-gradient(90deg, #dfdfdf 0, #e0dedd 50px, #e4d7d6 340px, #e5d9db 420px, #dfdbe0 520px, #e8dfda 620px, #ebe9e8 780px, #f1e5de 850px, #f0d6dd 980px, #e9d3e1 1100px, #ded2e6 1180px, #dcd7e5 1260px, #d3d9e6 1340px, #d8e1ec 1480px, #e3ebef 1600px); }
.start { width: 49px; padding-left: 16px; }
.search { width: 287px; height: 39px; background: #fff; border: 1px solid #ccc; border-top-color: #ddd; display: flex; align-items: center; padding-left: 10px; gap: 11px; font-size: 14.5px; color: #3a3a3a; letter-spacing: -.38px; }
.view { width: 50.500px; padding-left: 16px; }
.app { width: 49px; height: 40px; display: flex; align-items: center; justify-content: center; position: relative; flex: none; }
.app svg { width: 24px; height: 24px; }
.run::after { content: ""; position: absolute; left: 4.500px; bottom: 0; width: 40px; height: 2px; background: #0078d7; }
.current { background: linear-gradient(90deg, #f5f3f2 44px, #ddd 44px, #ddd 45px, #eeecea 45px); margin-left: 0; width: 48px; padding-right: 2px; }
.current::after { left: 0; width: 48px; }
.tray { margin-left: auto; display: flex; align-items: center; font-size: 12px; }
.tray > svg { margin-right: 7px; }
.tray .news { margin-right: 18px; }
.tray > svg:nth-child(2) { margin-right: 8.500px; }
.two { display: flex; flex-direction: column; align-items: center; line-height: 17px; letter-spacing: -.45px; white-space: nowrap; }
.lang { width: 28px; }
.clock { width: 78px; }
.notif { width: 45px; padding-left: 8px; border-right: 1px solid #b0b0b0; margin-right: 4px; position: relative; }
.badge { position: absolute; left: 15px; top: 7px; width: 17px; height: 17px; border-radius: 50%; border: 1px solid #888; background: #cfd2d4; text-align: center; line-height: 15px; font-size: 11px; }
```
